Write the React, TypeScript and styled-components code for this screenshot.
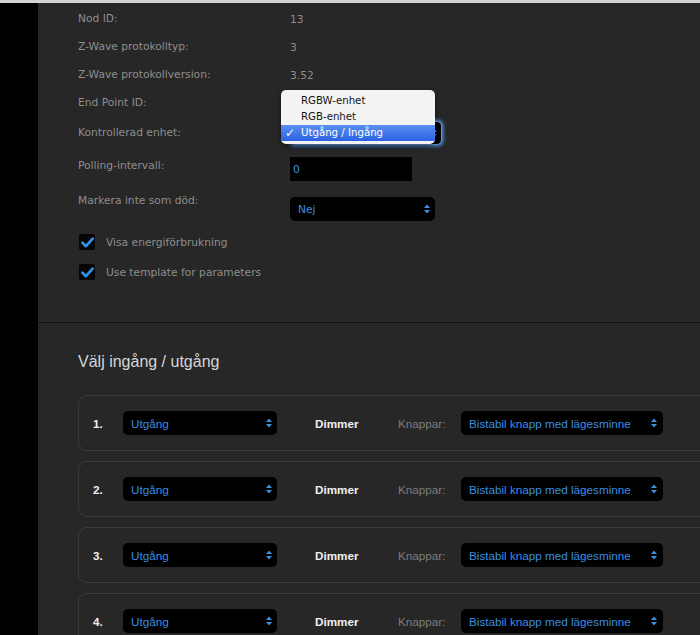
import React from "react";
import styled, { createGlobalStyle, css } from "styled-components";

const Global = createGlobalStyle`
  html, body { margin: 0; padding: 0; background: #272727; overflow: hidden; }
  #root { width: 700px; height: 635px; }
`;

const Page = styled.div`
  width: 700px;
  height: 635px;
  overflow: hidden;
  display: flex;
  flex-direction: column;
  background: #272727;
`;

const TopBar = styled.div`
  flex: none;
  height: 3px;
  background: #d2d2d2;
`;

const Shell = styled.div`
  flex: 1;
  display: flex;
  min-height: 0;
`;

const Sidebar = styled.aside`
  flex: none;
  width: 38px;
  background: #000;
`;

const Main = styled.main`
  flex: 1;
  min-width: 0;
  background: #272727;
`;

const Settings = styled.section`
  position: relative;
  padding: 2px 0 42px 40px;
  border-bottom: 1px solid #121212;
  font-family: "DejaVu Sans", Verdana, sans-serif;
  font-size: 10.7px;
  color: #8e8e8e;
`;

const InfoRow = styled.div`
  display: flex;
  align-items: center;
  height: 28px;
`;

const Row = styled.div<{ $mt: number }>`
  display: flex;
  align-items: flex-start;
  margin-top: ${(p) => p.$mt}px;
`;

const Label = styled.div<{ $dy?: number }>`
  flex: none;
  width: 212px;
  line-height: 24px;
  margin-top: ${(p) => p.$dy ?? 0}px;
`;

const Value = styled.div`
  color: #8e8e8e;
`;

const Select = styled.div<{ $w: number; $h?: number; $focus?: boolean; $pl?: number; $pr?: number }>`
  box-sizing: border-box;
  width: ${(p) => p.$w}px;
  height: ${(p) => p.$h ?? 24}px;
  display: flex;
  align-items: center;
  justify-content: space-between;
  padding: 0 ${(p) => p.$pr ?? 6}px 0 ${(p) => p.$pl ?? 8}px;
  background: #000;
  border-radius: 5px;
  color: #3b8ee0;
  ${(p) =>
    p.$focus &&
    css`
      border: 1px solid #6f9fd6;
      box-shadow: 0 0 3px 2px rgba(72, 138, 214, 0.8);
    `}
`;

const SelectValue = styled.span<{ $covered?: boolean }>`
  visibility: ${(p) => (p.$covered ? "hidden" : "visible")};
`;

const TextInput = styled.div`
  box-sizing: border-box;
  width: 122px;
  height: 24px;
  display: flex;
  align-items: center;
  padding-left: 3px;
  background: #000;
  color: #3b8ee0;
`;

const CheckRow = styled.div<{ $mt: number }>`
  display: flex;
  align-items: center;
  gap: 11px;
  margin-top: ${(p) => p.$mt}px;
  padding-left: 1px;
  height: 16px;
`;

const Box = styled.span`
  flex: none;
  width: 16px;
  height: 16px;
  border-radius: 2px;
  background: #050505;
  display: flex;
  align-items: center;
  justify-content: center;
`;

const Menu = styled.div`
  position: absolute;
  left: 243px;
  top: 87px;
  width: 154px;
  box-sizing: border-box;
  padding: 3px 0 3px;
  background: #f3f3f3;
  border-radius: 5px;
  box-shadow: 0 2px 6px rgba(0, 0, 0, 0.55);
  font-family: "DejaVu Sans", Verdana, sans-serif;
  font-size: 10.2px;
  color: #141414;
  overflow: hidden;
`;

const MenuItem = styled.div<{ $active?: boolean }>`
  position: relative;
  height: 16px;
  line-height: 16px;
  padding-left: 20px;
  ${(p) =>
    p.$active &&
    css`
      background: linear-gradient(#5a8ff2, #2b62e2);
      color: #fff;
    `}
`;

const Tick = styled.span`
  position: absolute;
  left: 4px;
  top: 0;
  font-size: 12px;
  font-weight: bold;
`;

const Outputs = styled.section`
  padding: 29px 0 0 40px;
  font-family: "Liberation Sans", Arial, sans-serif;
`;

const Heading = styled.h2`
  margin: 0;
  font-size: 16px;
  line-height: 20px;
  font-weight: normal;
  color: #d6d6d6;
`;

const Cards = styled.div`
  margin-top: 23px;
  display: flex;
  flex-direction: column;
  gap: 10px;
`;

const Card = styled.div`
  flex: none;
  box-sizing: border-box;
  width: 700px;
  height: 56px;
  border: 1px solid #3b3b3b;
  border-radius: 9px;
  display: flex;
  align-items: center;
  padding: 0 0 0 14px;
  font-size: 11.7px;
`;

const Num = styled.span`
  width: 30px;
  font-weight: bold;
  color: #f0f0f0;
`;

const Kind = styled.span`
  width: 83px;
  margin-left: 38px;
  font-weight: bold;
  color: #f0f0f0;
`;

const KeysLabel = styled.span`
  width: 63px;
  color: #7c7c7c;
`;

const Arrows = () => (
  <svg width="6" height="10" viewBox="0 0 6 10" aria-hidden>
    <path d="M0 4 L3 0.5 L6 4 Z M0 6 L3 9.5 L6 6 Z" fill="#3b8ee0" />
  </svg>
);

const Check = () => (
  <svg width="15" height="15" viewBox="0 0 14 14" aria-hidden>
    <path d="M2.3 7.3 L5.6 10.4 L11.8 3.4" fill="none" stroke="#2f92ec" strokeWidth="2.6" strokeLinecap="round" strokeLinejoin="round" />
  </svg>
);

const info = [
  ["Nod ID:", "13"],
  ["Z-Wave protokolltyp:", "3"],
  ["Z-Wave protokollversion:", "3.52"],
  ["End Point ID:", ""],
];

export default function App() {
  return (
    <Page>
      <Global />
      <TopBar />
      <Shell>
        <Sidebar />
        <Main>
          <Settings>
            {info.map(([l, v]) => (
              <InfoRow key={l}>
                <Label>{l}</Label>
                <Value>{v}</Value>
              </InfoRow>
            ))}
            <Row $mt={4}>
              <Label>Kontrollerad enhet:</Label>
              <Select $w={152} $focus $pr={4}>
                <SelectValue $covered>Utgång / Ingång</SelectValue>
                <Arrows />
              </Select>
            </Row>
            <Row $mt={12}>
              <Label $dy={-3}>Polling-intervall:</Label>
              <TextInput>0</TextInput>
            </Row>
            <Row $mt={16}>
              <Label $dy={-8}>Markera inte som död:</Label>
              <Select $w={145} $pr={5}>
                <SelectValue>Nej</SelectValue>
                <Arrows />
              </Select>
            </Row>
            <CheckRow $mt={13}>
              <Box>
                <Check />
              </Box>
              <span>Visa energiförbrukning</span>
            </CheckRow>
            <CheckRow $mt={14}>
              <Box>
                <Check />
              </Box>
              <span>Use template for parameters</span>
            </CheckRow>
            <Menu>
              <MenuItem>RGBW-enhet</MenuItem>
              <MenuItem>RGB-enhet</MenuItem>
              <MenuItem $active>
                <Tick>✓</Tick>
                Utgång / Ingång
              </MenuItem>
            </Menu>
          </Settings>
          <Outputs>
            <Heading>Välj ingång / utgång</Heading>
            <Cards>
              {[1, 2, 3, 4].map((n) => (
                <Card key={n}>
                  <Num>{n}.</Num>
                  <Select $w={154} $pr={5}>
                    <SelectValue>Utgång</SelectValue>
                    <Arrows />
                  </Select>
                  <Kind>Dimmer</Kind>
                  <KeysLabel>Knappar:</KeysLabel>
                  <Select $w={202} $pr={6}>
                    <SelectValue>Bistabil knapp med lägesminne</SelectValue>
                    <Arrows />
                  </Select>
                </Card>
              ))}
            </Cards>
          </Outputs>
        </Main>
      </Shell>
    </Page>
  );
}
